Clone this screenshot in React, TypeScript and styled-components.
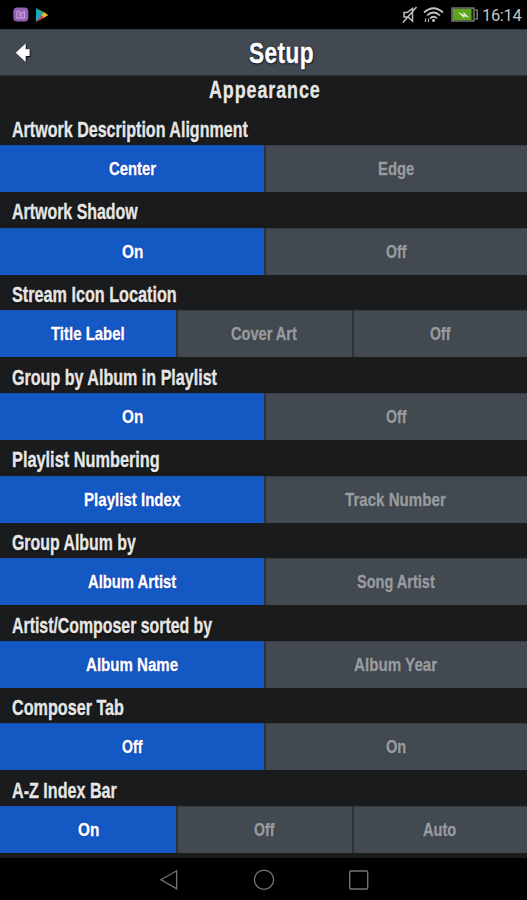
import React, { useLayoutEffect, useRef, useState } from "react";
import styled, { createGlobalStyle } from "styled-components";

const GlobalStyle = createGlobalStyle`
  * { box-sizing: border-box; }
  html, body { margin: 0; padding: 0; background: #000; overflow: hidden; }
  body { font-family: "Liberation Sans", Arial, sans-serif; }
`;

const Screen = styled.div`
  width: 527px;
  height: 900px;
  display: flex;
  flex-direction: column;
  background: #191b1d;
  overflow: hidden;
`;

const StatusBar = styled.div`
  flex: 0 0 29px;
  display: flex;
  align-items: center;
  justify-content: space-between;
  padding: 0 5px 0 13px;
  background: #000;
`;

const StatusGroup = styled.div`
  display: flex;
  align-items: center;
  height: 29px;
  svg { display: block; }
`;

const Clock = styled.span`
  margin-left: 4px;
  color: #c4c4c4;
  font-family: Roboto, sans-serif;
  font-size: 16.5px;
  line-height: 29px;
  width: 40px;
  white-space: nowrap;
  padding-top: 2px;
  letter-spacing: -0.35px;
`;

const Header = styled.header`
  flex: 0 0 47px;
  display: flex;
  align-items: center;
  background: #434950;
  border-top: 1px solid #33383c;
  border-bottom: 1px solid #2c3034;
`;

const BackButton = styled.button`
  flex: 0 0 36px;
  height: 45px;
  padding: 0 0 0 14px;
  border: 0;
  background: none;
  display: flex;
  align-items: center;
`;

const Title = styled.h1`
  flex: 1;
  margin: 0;
  padding: 1px 0 0;
  font-size: 30px;
  line-height: 42px;
  display: flex;
  justify-content: center;
  letter-spacing: 0.5px;
  color: #fff;
  text-shadow: 1px 1px 2px #090d2b, 0 0 2px #111633;
`;

const SectionTitle = styled.h2`
  flex: 0 0 33.4px;
  margin: 0;
  padding: 1px 0 0 3px;
  display: flex;
  justify-content: center;
  font-size: 23.5px;
  line-height: 26px;
  letter-spacing: 1.2px;
  color: #e6e6e6;
  text-shadow: 0 1px 2px #000;
`;

const Setting = styled.section`
  flex: 0 0 82.63px;
  display: flex;
  flex-direction: column;
`;

const SettingLabel = styled.div`
  flex: 0 0 35.63px;
  height: 35.63px;
  padding: 5.4px 0 0 12px;
  display: flex;
  font-size: 21.5px;
  font-weight: bold;
  line-height: 30px;
  color: #e6e6e6;
  text-shadow: 0 1px 2px #000;
`;

const Segments = styled.div<{ $count: number }>`
  flex: 0 0 47px;
  display: grid;
  grid-template-columns: ${(p) => (p.$count === 3 ? "176px 176px 1fr" : "264px 1fr")};
`;

const Segment = styled.button<{ $active: boolean; $divider: number }>`
  min-width: 0;
  border: 0;
  padding: 1px 0 0;
  display: flex;
  align-items: center;
  justify-content: center;
  background: ${(p) => (p.$active ? "#1459c3" : "#434950")};
  box-shadow: inset ${(p) => p.$divider}px 0 0 #2d3337,
    inset 0 1px 0 ${(p) => (p.$active ? "#1950ac" : "#383d41")};
  color: ${(p) => (p.$active ? "#fff" : "#989b9f")};
  font-family: inherit;
  font-size: 19px;
  font-weight: bold;
  text-shadow: ${(p) => (p.$active ? "0 0 2px #1017a8" : "0 0 2px #393e44")};
`;

const Filler = styled.div`
  flex: 1;
`;

const NavBar = styled.nav`
  flex: 0 0 42px;
  display: flex;
  align-items: center;
  justify-content: center;
  gap: 73px;
  padding-bottom: 1px;
  background: #000;
  svg { display: block; }
`;

const FittedBox = styled.span`
  display: block;
  flex: none;
`;

const FittedText = styled.span`
  display: inline-block;
  white-space: nowrap;
  transform-origin: 0 50%;
  -webkit-text-stroke: 0.35px currentColor;
`;

/** Condenses a line of text horizontally to a given width. */
function Condensed({ text, width }: { text: string; width: number }) {
  const ref = useRef<HTMLSpanElement>(null);
  const [scale, setScale] = useState(0.75);
  useLayoutEffect(() => {
    if (ref.current) setScale(width / ref.current.offsetWidth);
  }, [text, width]);
  return (
    <FittedBox style={{ width }}>
      <FittedText ref={ref} style={{ transform: `scaleX(${scale})` }}>
        {text}
      </FittedText>
    </FittedBox>
  );
}

type Entry = [text: string, width: number];

const settings: { label: Entry; options: Entry[] }[] = [
  { label: ["Artwork Description Alignment", 236], options: [["Center", 47], ["Edge", 36]] },
  { label: ["Artwork Shadow", 126], options: [["On", 21], ["Off", 20]] },
  { label: ["Stream Icon Location", 165], options: [["Title Label", 74], ["Cover Art", 66], ["Off", 20]] },
  { label: ["Group by Album in Playlist", 205], options: [["On", 21], ["Off", 20]] },
  { label: ["Playlist Numbering", 148], options: [["Playlist Index", 96], ["Track Number", 101]] },
  { label: ["Group Album by", 124], options: [["Album Artist", 88], ["Song Artist", 78]] },
  { label: ["Artist/Composer sorted by", 200], options: [["Album Name", 92], ["Album Year", 83]] },
  { label: ["Composer Tab", 112], options: [["Off", 20], ["On", 20]] },
  { label: ["A-Z Index Bar", 105], options: [["On", 21], ["Off", 20], ["Auto", 33]] },
];

export default function App() {
  return (
    <>
      <GlobalStyle />
      <Screen>
        <StatusBar>
          <StatusGroup>
            <svg width="36" height="16" viewBox="0 0 36 16">
              <rect x="0.3" y="0.5" width="15" height="14" rx="4" fill="#9460b4" />
              <path d="M4 4v7h7.5v-7M4 4l3 1v3l4.5-4M7 8l2 1.5" fill="none" stroke="#c09bd2" strokeWidth="1.3" />
              <path d="M23 1v14l7-7z" fill="#19a7c4" />
              <path d="M23 1l9 4.8L29 8z" fill="#2fae70" />
              <path d="M23 15l9-4.8L29 8z" fill="#d34348" />
              <path d="M31 5.3L35.3 8 31 10.7 28.5 8z" fill="#e8bd2b" />
            </svg>
          </StatusGroup>
          <StatusGroup>
            <svg width="80" height="20" viewBox="0 0 80 20">
              <g fill="none" stroke="#bdbdbd" strokeWidth="1.5">
                <path d="M6 7.5h3l5.5-4v12.5l-4.5-4H6zM5 17.5L18.5 2" />
              </g>
              <g fill="none" stroke="#c4c4c4" strokeWidth="1.7">
                <path d="M26 7.5Q35.5 -1 45 7.5M29 10.5Q35.5 4.5 42 10.5M32 13.5Q35.5 10 39 13.5" />
              </g>
              <circle cx="35.5" cy="15.5" r="1.4" fill="#ccc" />
              <path d="M27.5 13.5v3.5M30.5 13.5v3.5" stroke="#aaa" strokeWidth="1.2" />
              <rect x="54" y="3" width="22" height="13" fill="#16230f" stroke="#8b8f89" strokeWidth="1.2" />
              <rect x="55" y="4" width="18.5" height="11" fill="#5fa51b" />
              <path d="M77 5h2.2v9H77" fill="none" stroke="#999" strokeWidth="1.2" />
              <path d="M59.5 7l6.500 2.5-1-3 6.500 6-5.500-1 .5 2z" fill="#dce9cf" />
            </svg>
            <Clock>16:14</Clock>
          </StatusGroup>
        </StatusBar>
        <Header>
          <BackButton aria-label="Back">
            <svg width="20" height="24" viewBox="0 0 20 24">
              <path d="M2.8 12.6L12.7 3.2v5.9h3.9v7.2h-3.9v5.7z" fill="#15191f" />
              <path d="M1.8 11.7L11.7 2.5v5.8h3.9v6.7h-3.9v5.9z" fill="#fff" />
            </svg>
          </BackButton>
          <Title>
            <Condensed text="Setup" width={65} />
          </Title>
        </Header>
        <SectionTitle>
          <Condensed text="Appearance" width={112} />
        </SectionTitle>
        {settings.map(({ label, options }) => (
          <Setting key={label[0]}>
            <SettingLabel>
              <Condensed text={label[0]} width={label[1]} />
            </SettingLabel>
            <Segments $count={options.length}>
              {options.map(([text, width], i) => (
                <Segment key={text} $active={i === 0} $divider={i === 0 ? 0 : 2}>
                  <Condensed text={text} width={width} />
                </Segment>
              ))}
            </Segments>
          </Setting>
        ))}
        <Filler />
        <NavBar>
          <svg width="22" height="24" viewBox="0 0 22 24">
            <path d="M3 12.7L18.7 3.8v18z" fill="none" stroke="#747474" strokeWidth="1.3" />
          </svg>
          <svg width="22" height="24" viewBox="0 0 22 24">
            <circle cx="11" cy="12.7" r="9.6" fill="none" stroke="#747474" strokeWidth="1.3" />
          </svg>
          <svg width="22" height="24" viewBox="0 0 22 24">
            <rect x="1.7" y="4" width="18" height="18" rx="1" fill="none" stroke="#747474" strokeWidth="1.4" />
          </svg>
        </NavBar>
      </Screen>
    </>
  );
}
